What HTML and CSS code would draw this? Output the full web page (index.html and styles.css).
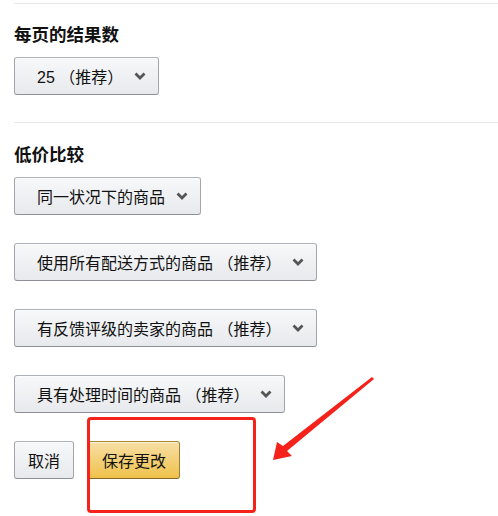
FILE: index.html
```html
<!DOCTYPE html>
<html lang="zh-CN">
<head>
    <meta charset="UTF-8">
    <meta name="viewport" content="width=device-width, initial-scale=1.0">
    <title>设置</title>
    <link rel="stylesheet" href="styles.css">
</head>
<body>
    <main class="prefs">
        <section class="block">
            <h3>每页的结果数</h3>
            <div class="select">
                <span>25 （推荐）</span>
                <svg class="chev" viewBox="0 0 12 8"><path d="M1.5 1.5 L6 6 L10.5 1.5"/></svg>
            </div>
        </section>

        <section class="block">
            <h3>低价比较</h3>
            <div class="stack">
                <div class="select">
                    <span>同一状况下的商品</span>
                    <svg class="chev" viewBox="0 0 12 8"><path d="M1.5 1.5 L6 6 L10.5 1.5"/></svg>
                </div>
                <div class="select">
                    <span>使用所有配送方式的商品 （推荐）</span>
                    <svg class="chev" viewBox="0 0 12 8"><path d="M1.5 1.5 L6 6 L10.5 1.5"/></svg>
                </div>
                <div class="select">
                    <span>有反馈评级的卖家的商品 （推荐）</span>
                    <svg class="chev" viewBox="0 0 12 8"><path d="M1.5 1.5 L6 6 L10.5 1.5"/></svg>
                </div>
                <div class="select">
                    <span>具有处理时间的商品 （推荐）</span>
                    <svg class="chev" viewBox="0 0 12 8"><path d="M1.5 1.5 L6 6 L10.5 1.5"/></svg>
                </div>
                <div class="actions">
                    <button class="btn">取消</button>
                    <button class="btn primary">保存更改</button>
                </div>
            </div>
        </section>
    </main>

    <!-- annotation drawn over the page -->
    <div class="mark-box"></div>
    <svg class="mark-arrow" width="498" height="516" viewBox="0 0 498 516">
        <polygon points="374,379 287,451 292,456 273,460 277,442 283,446 372,377"/>
    </svg>
</body>
</html>
```

FILE: styles.css
```css
body {
    margin: 0;
    background: #fff;
    color: #111;
    font-family: "Liberation Sans", "Noto Sans CJK SC", sans-serif;
    position: relative;
    height: 516px;
    overflow: hidden;
}
.prefs {
    padding-left: 14px;
}
.block {
    border-top: 1px solid #e7e7e7;
    margin-top: 3px;
    padding-bottom: 27px;
}
.block + .block {
    margin-top: 0;
}
h3 {
    font-size: 17.5px;
    font-weight: bold;
    line-height: 24px;
    margin: 19px 0 10px;
}
.block + .block h3 {
    margin-top: 20px;
}
.stack {
    display: flex;
    flex-direction: column;
    align-items: flex-start;
    gap: 28px;
}
.select {
    display: inline-flex;
    align-items: center;
    gap: 11px;
    height: 38px;
    box-sizing: border-box;
    padding: 0 12px 0 22px;
    border: 1px solid #adb1b8;
    border-color: #adb1b8 #a2a6ac #8d9096;
    border-radius: 3px;
    background: linear-gradient(to bottom, #f7f8fa, #e7e9ec);
    box-shadow: inset 0 1px 0 rgba(255, 255, 255, .6);
    font-size: 16px;
    white-space: nowrap;
}
.chev {
    width: 12px;
    height: 8px;
    fill: none;
    stroke: #555;
    stroke-width: 2.8;
}
.actions {
    display: flex;
    gap: 14px;
}
.btn {
    height: 38px;
    padding: 0 13px;
    font-family: inherit;
    font-size: 16px;
    color: #111;
    border: 1px solid #adb1b8;
    border-color: #adb1b8 #a2a6ac #8d9096;
    border-radius: 3px;
    background: linear-gradient(to bottom, #f7f8fa, #e7e9ec);
    box-shadow: inset 0 1px 0 rgba(255, 255, 255, .6);
}
.btn.primary {
    border-color: #a88734 #9c7e31 #846a29;
    background: linear-gradient(to bottom, #f7dfa5, #f0c14b);
}
.mark-box {
    position: absolute;
    left: 87px;
    top: 417px;
    width: 163px;
    height: 90px;
    border: 3px solid #f5221b;
    border-radius: 4px;
}
.mark-arrow {
    position: absolute;
    left: 0;
    top: 0;
    fill: #f5221b;
}
```
